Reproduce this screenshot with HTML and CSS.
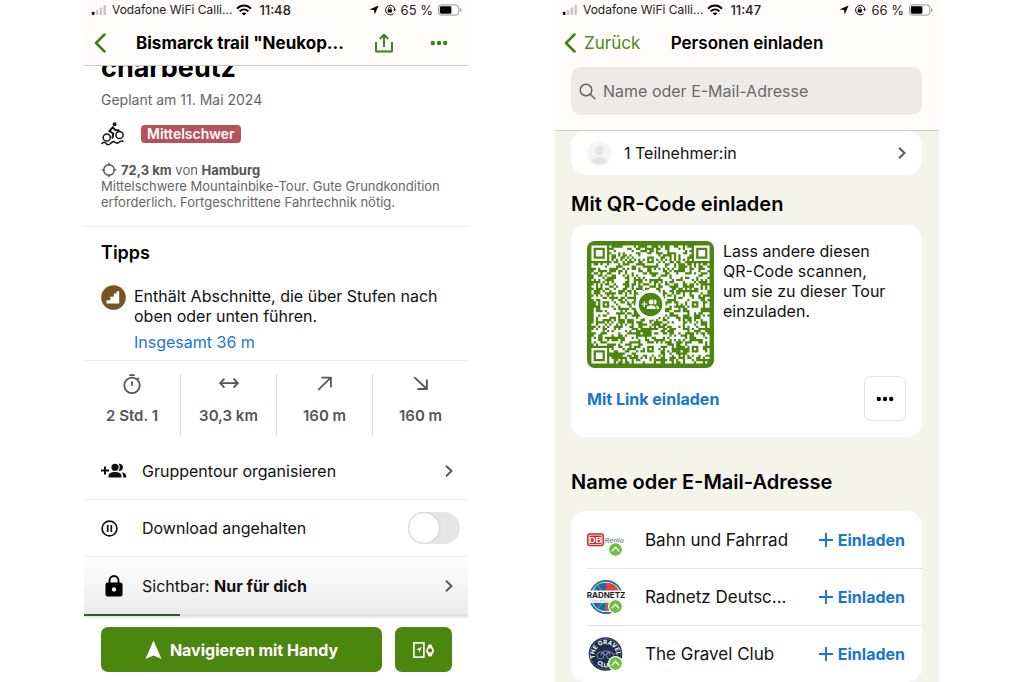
FILE: index.html
```html
<!DOCTYPE html>
<html lang="de">
<head>
<meta charset="utf-8">
<meta name="viewport" content="width=device-width, initial-scale=1">
<title>Tour planen</title>
<link rel="stylesheet" href="styles.css">
</head>
<body>
<svg class="defs" aria-hidden="true">
  <symbol id="signal" viewBox="0 0 17 12"><rect x="0" y="8" width="3" height="4" rx=".8" fill="#111"/><rect x="4.6" y="6" width="3" height="6" rx=".8" fill="#c9c7c6"/><rect x="9.2" y="3" width="3" height="9" rx=".8" fill="#c9c7c6"/><rect x="13.8" y="0" width="3" height="12" rx=".8" fill="#c9c7c6"/></symbol>
  <symbol id="wifi" viewBox="0 0 16 12"><g fill="none" stroke="#000" stroke-width="2"><path d="M1 4.6C5 .4 11 .4 15 4.6"/><path d="M3.6 7.4c2.6-2.5 6.2-2.5 8.8 0"/></g><path d="M8 11.6L5.7 9.3c1.3-1.2 3.3-1.2 4.6 0z"/></symbol>
  <symbol id="locate" viewBox="0 0 10 10"><path d="M9.6.4L5.7 9.6 5.1 5.1.4 4.4z"/></symbol>
  <symbol id="rotlock" viewBox="0 0 12 12"><path d="M9.8 2.7A4.8 4.8 0 1 0 9.600 9.600" fill="none" stroke="#111" stroke-width="1"/><path d="M9.8 2.7a4.800 4.800 0 0 1 .9 2.800" fill="none" stroke="#111" stroke-width="1"/><path d="M9 5.300h3l-1.400 2z"/><rect x="3.7" y="5.2" width="4.2" height="3.3" rx=".5"/><path d="M4.6 5.3V4.4a1.2 1.2 0 0 1 2.4 0v.9" fill="none" stroke="#111" stroke-width=".9"/></symbol>
  <symbol id="battery" viewBox="0 0 26 12"><rect x=".5" y=".5" width="22" height="11" rx="3" fill="#fff" stroke="#8e8c8b"/><rect x="2" y="2" width="12.5" height="8" rx="1.5"/><path d="M24 4v4c1-.3 1.5-1 1.5-2S25 4.300 24 4z" fill="#8e8c8b"/></symbol>
  <symbol id="back" viewBox="0 0 12 20"><path d="M10.500 1.500L2 10l8.500 8.500" fill="none" stroke="#3d8210" stroke-width="2.500" stroke-linecap="round" stroke-linejoin="round"/></symbol>
  <symbol id="chevron" viewBox="0 0 10 14"><path d="M2 1.700L7.500 7 2 12.300" fill="none" stroke="#555" stroke-width="1.900"/></symbol>
  <symbol id="group" viewBox="0 0 26 16"><path d="M0 7.500h8M4 3.500v8" stroke="currentColor" stroke-width="2" fill="none"/><circle cx="14" cy="4.300" r="3.600" fill="currentColor"/><path d="M7.500 14.500v-1.500c0-2.800 3-4 6.500-4s6.500 1.200 6.500 4v1.500z" fill="currentColor"/><path d="M20.500 9.300c3 .5 4.700 1.700 4.700 3.700v1.500h-3V13c0-1.500-.6-2.700-1.700-3.700z" fill="currentColor"/><path d="M17.600 .8a3.600 3.600 0 1 1 0 7c1.500-2 1.500-5 0-7z" fill="currentColor"/></symbol>
  <symbol id="dots" viewBox="0 0 18 6"><circle cx="2.800" cy="3" r="2.200"/><circle cx="9" cy="3" r="2.200"/><circle cx="15.200" cy="3" r="2.200"/></symbol>
  <symbol id="verified" viewBox="0 0 14 14"><circle cx="7" cy="7" r="7" fill="#6cc13f"/><path d="M3 9l4-4.300L11 9" fill="none" stroke="#fff" stroke-width="1.500"/></symbol>
  <symbol id="plus" viewBox="0 0 16 16"><path d="M8 1v14M1 8h14" stroke="#1a76d2" stroke-width="1.900"/></symbol>
</svg>

<main class="screens">
  <section class="phone tour">
    <header class="topbar">
      <div class="status">
        <svg class="i-signal"><use href="#signal"/></svg><span>Vodafone WiFi Calli...</span><svg class="i-wifi"><use href="#wifi"/></svg><span class="time">11:48</span>
        <span class="status-right"><svg class="i-small"><use href="#locate"/></svg><svg class="i-lock"><use href="#rotlock"/></svg><span>65 %</span><svg class="i-battery"><use href="#battery"/></svg></span>
      </div>
      <div class="nav">
        <button class="plain" aria-label="Zurück"><svg class="i-back"><use href="#back"/></svg></button>
        <h1 class="nav-title tour-title">Bismarck trail "Neukop...</h1>
        <button class="plain share" aria-label="Teilen"><svg width="18" height="20" viewBox="0 0 18 20" fill="none" stroke="#3d8210" stroke-width="1.900" stroke-linejoin="round"><path d="M1 9v9.500h16V9M9 14V2M4.800 6L9 1.600 13.200 6"/></svg></button>
        <button class="plain more" aria-label="Mehr"><svg class="i-dots"><use href="#dots"/></svg></button>
      </div>
    </header>

    <div class="scroll">
      <div class="summary">
        <h2 class="place">charbeutz</h2>
        <p class="planned">Geplant am 11. Mai 2024</p>
        <div class="sport">
          <svg width="24" height="24" viewBox="0 0 24 24" fill="none" stroke="#151515" stroke-width="1.500" stroke-linejoin="round" stroke-linecap="round"><circle cx="5.800" cy="15.500" r="3.600"/><circle cx="18.500" cy="13" r="3.600"/><circle cx="13.600" cy="2.300" r="1.200" fill="#151515"/><path d="M11.700 5.300L8.300 9.200l4 2.300-.8 4.300M11.700 5.300l2.600 2.800 3.300.2M8.500 9l3-3.300" stroke-width="2"/><path d="M1 21.500c1.400-1.600 3-1.600 4.200 0s2.800 1.600 4.300 0 2.800-2.800 4.500-1.300 2.700 1.300 4 0 2.700-1.700 4-.8"/></svg>
          <span class="badge">Mittelschwer</span>
        </div>
        <p class="meta"><svg width="16" height="16" viewBox="0 0 16 16" fill="none" stroke="#555" stroke-width="1.400"><circle cx="8" cy="8" r="5.300"/><path d="M8 .8v3M8 12.200v3M.8 8h3M12.200 8h3"/></svg><span><b>72,3 km</b> von <b>Hamburg</b></span></p>
        <p class="detail">Mittelschwere Mountainbike-Tour. Gute Grundkondition erforderlich. Fortgeschrittene Fahrtechnik nötig.</p>
      </div>

      <section class="tips">
        <h2>Tipps</h2>
        <div class="tip">
          <svg width="25" height="25" viewBox="0 0 25 25"><circle cx="12.500" cy="12.500" r="12.300" fill="#765522"/><path d="M5.500 18.500v-3.300h3.800v-3.400h3.500V8.500h2.700V6.300h2.700v12.200z" fill="#fff"/></svg>
          <div>
            <p>Enthält Abschnitte, die über Stufen nach oben oder unten führen.</p>
            <a href="#stufen">Insgesamt 36 m</a>
          </div>
        </div>
      </section>

      <ul class="stats">
        <li><svg width="20" height="20" viewBox="0 0 22 22" fill="none" stroke="#555" stroke-width="2"><circle cx="11" cy="12.500" r="8.500"/><path d="M8 1.300h6M11 8v5M17 5.500l1.500-1.300"/></svg><span>2 Std. 1</span></li>
        <li><svg width="20" height="20" viewBox="0 0 22 22" fill="none" stroke="#555" stroke-width="2"><path d="M2 10h18M6 5L1.300 10l4.700 5M16 5l4.700 5-4.700 5"/></svg><span>30,3 km</span></li>
        <li><svg width="20" height="20" viewBox="0 0 22 22" fill="none" stroke="#555" stroke-width="2"><path d="M3.500 17.500L17.500 4M7 4h10.500v10.500"/></svg><span>160 m</span></li>
        <li><svg width="20" height="20" viewBox="0 0 22 22" fill="none" stroke="#555" stroke-width="2"><path d="M3.500 3.500L17.500 16.500M17.500 6v10.500H7"/></svg><span>160 m</span></li>
      </ul>

      <div class="rows">
        <button class="plain row"><span class="row-icon"><svg width="26" height="16"><use href="#group"/></svg></span><span class="row-label">Gruppentour organisieren</span><svg class="i-chevron"><use href="#chevron"/></svg></button>
        <div class="row">
          <span class="row-icon"><svg width="17" height="17" viewBox="0 0 17 17" fill="none" stroke="#111" stroke-width="1.700"><circle cx="8.500" cy="8.500" r="7.400"/><path d="M6.700 5v7M10.300 5v7"/></svg></span>
          <label class="row-label" for="download">Download angehalten</label>
          <input class="switch" type="checkbox" id="download">
        </div>
        <button class="plain row fade"><span class="row-icon lock"><svg width="18" height="22" viewBox="0 0 18 22"><path d="M4.500 8V5.500a4.500 4.500 0 0 1 9 0V8" fill="none" stroke="#000" stroke-width="1.800"/><path fill-rule="evenodd" d="M2.500 7.500h13a2 2 0 0 1 2 2v10a2 2 0 0 1-2 2h-13a2 2 0 0 1-2-2v-10a2 2 0 0 1 2-2zM9 12.300a2.200 2.200 0 1 0 .01 0z"/></svg></span><span class="row-label">Sichtbar: <b>Nur für dich</b></span><svg class="i-chevron"><use href="#chevron"/></svg></button>
      </div>
      <div class="scrollbar"></div>
    </div>

    <footer class="actions">
      <button class="go"><svg width="17" height="20" viewBox="0 0 17 20"><path d="M8.500.5L16.500 19l-8-3.600L.5 19z" fill="#fff"/></svg>Navigieren mit Handy</button>
      <button class="devices" aria-label="An Gerät senden"><svg width="21" height="16" viewBox="0 0 21 16" fill="none" stroke="#fff"><rect x=".9" y=".9" width="10" height="14.200" stroke-width="1.600"/><path d="M8.700 4.800L6.500 10.800 6 8.200 3.300 7.500z" fill="#fff" stroke="none"/><circle cx="17" cy="8.500" r="3" stroke-width="1.700"/><path d="M15 5.500l.6-2.500h2.800l.6 2.500M15 11.500l.6 2.500h2.800l.6-2.500" fill="#fff" stroke-width="1"/></svg></button>
    </footer>
  </section>

  <section class="phone invite">
    <header class="topbar">
      <div class="status">
        <svg class="i-signal"><use href="#signal"/></svg><span>Vodafone WiFi Calli...</span><svg class="i-wifi"><use href="#wifi"/></svg><span class="time">11:47</span>
        <span class="status-right"><svg class="i-small"><use href="#locate"/></svg><svg class="i-lock"><use href="#rotlock"/></svg><span>66 %</span><svg class="i-battery"><use href="#battery"/></svg></span>
      </div>
      <div class="nav centered">
        <button class="plain back-label"><svg class="i-back"><use href="#back"/></svg>Zurück</button>
        <h1 class="nav-title">Personen einladen</h1>
      </div>
      <label class="search">
        <svg width="17" height="17" viewBox="0 0 17 17" fill="none" stroke="#666" stroke-width="1.500"><circle cx="7" cy="7" r="5.800"/><path d="M11.300 11.300l5 5"/></svg>
        <input type="search" placeholder="Name oder E-Mail-Adresse" aria-label="Name oder E-Mail-Adresse">
      </label>
    </header>

    <div class="scroll invite-body">
      <button class="plain card participant">
        <svg width="25" height="25" viewBox="0 0 25 25"><circle cx="12.500" cy="12.500" r="12.300" fill="#f5f5f5"/><circle cx="12.500" cy="9.500" r="4.500" fill="#e4e4e4"/><path d="M4.500 20.500c2-6 14-6 16 0a12 12 0 0 1-16 0z" fill="#e4e4e4"/></svg>
        <span class="row-label">1 Teilnehmer:in</span>
        <svg class="i-chevron"><use href="#chevron"/></svg>
      </button>

      <h2 class="section-title">Mit QR-Code einladen</h2>
      <div class="card qr-card">
        <div class="qr-top">
          <svg class="qr" id="qr" viewBox="0 0 57 57" role="img" aria-label="QR-Code"><rect width="57" height="57" rx="3.500" fill="#4b860e"/></svg>
          <p>Lass andere diesen<br>QR-Code scannen,<br>um sie zu dieser Tour einzuladen.</p>
        </div>
        <div class="qr-bottom">
          <a class="strong" href="#link">Mit Link einladen</a>
          <button class="options" aria-label="Weitere Optionen"><svg class="i-dots"><use href="#dots"/></svg></button>
        </div>
      </div>

      <h2 class="section-title second">Name oder E-Mail-Adresse</h2>
      <ul class="card people">
        <li>
          <span class="avatar"><svg width="38" height="38" viewBox="0 0 38 38"><rect x=".8" y="13" width="15.500" height="11.500" rx="2" fill="#fff" stroke="#d3202e" stroke-width="1.500"/><rect x="2.500" y="14.500" width="12" height="8.500" fill="#d3202e"/><text x="8.500" y="22.300" text-anchor="middle" class="logo-db">DB</text><text x="17.500" y="21.500" class="logo-regio">Regio</text></svg><svg class="tick"><use href="#verified"/></svg></span>
          <span class="name">Bahn und Fahrrad</span>
          <button class="plain add"><svg width="16" height="16"><use href="#plus"/></svg>Einladen</button>
        </li>
        <li>
          <span class="avatar"><svg width="38" height="38" viewBox="0 0 38 38"><circle cx="19" cy="19" r="16" fill="#fff" stroke="#20709b" stroke-width="1.800"/><path d="M19 19L6 13A14 14 0 0 1 19 4.800z" fill="#1d6c9c"/><path d="M19 4.800A14 14 0 0 1 32 13L19 19z" fill="#e43d42"/><path d="M6 25l13-3v11A14 14 0 0 1 6 25z" fill="#1d6c9c"/><path d="M19 22l13 3a14 14 0 0 1-13 8z" fill="#e43d42"/><path d="M19 19L10 6M19 19L5 9M19 20L9 33M19 20v14" stroke="#79b0cd" stroke-width=".7"/><rect y="12.500" width="38" height="12.500" fill="#fff"/><text x="19" y="19.500" text-anchor="middle" class="logo-rad">RADNETZ</text><text x="15" y="24.500" text-anchor="middle" class="logo-sub">DEUTSCH</text></svg><svg class="tick"><use href="#verified"/></svg></span>
          <span class="name">Radnetz Deutsc...</span>
          <button class="plain add"><svg width="16" height="16"><use href="#plus"/></svg>Einladen</button>
        </li>
        <li>
          <span class="avatar"><svg width="38" height="38" viewBox="0 0 38 38"><circle cx="18.500" cy="19" r="16.800" fill="#1c2c4b"/><circle cx="18.500" cy="19" r="15.500" fill="none" stroke="#62708a" stroke-width=".7"/><path id="arc-top" d="M8 23.500A11 11 0 1 1 29.500 21" fill="none"/><path id="arc-low" d="M7 25A13.500 13.500 0 0 0 29 28" fill="none"/><text class="logo-gravel"><textPath href="#arc-top">THE GRAVEL</textPath></text><text class="logo-gravel"><textPath href="#arc-low" startOffset="18%">CLUB</textPath></text><g fill="none" stroke="#8b99b3" stroke-width=".9"><circle cx="13.500" cy="20.500" r="3.500"/><circle cx="23" cy="20.500" r="3.500"/><path d="M13.500 20.500l3-4.500h5l1.500 4.500M16 17l2 3.500 3.500-4"/></g><path d="M24 18l5 1" stroke="#d34355" stroke-width="1.200"/></svg><svg class="tick"><use href="#verified"/></svg></span>
          <span class="name">The Gravel Club</span>
          <button class="plain add"><svg width="16" height="16"><use href="#plus"/></svg>Einladen</button>
        </li>
      </ul>
    </div>
  </section>
</main>
<script src="qr.js"></script>
</body>
</html>
```

FILE: styles.css
```css
* { box-sizing: border-box; }
body {
  margin: 0;
  background: #fff;
  color: #111;
  font: 16px/20px Inter, "Liberation Sans", sans-serif;
}
h1, h2, p, ul { margin: 0; padding: 0; }
ul { list-style: none; }
svg { flex: none; display: block; }
a { color: #1a76d2; text-decoration: none; }
b { font-weight: 700; }
.defs { position: absolute; width: 0; height: 0; }
.plain { border: 0; padding: 0; background: none; color: inherit; font: inherit; text-align: left; }

.screens {
  display: grid;
  grid-template-columns: 1fr 1fr;
  gap: 87px;
  height: 100vh;
  padding: 0 85px 0 84px;
  overflow: hidden;
}
.phone { display: flex; flex-direction: column; min-width: 0; min-height: 0; }

.topbar { flex: none; background: #fffcfb; border-bottom: 1px solid #cfcdcb; }
.status { display: flex; align-items: center; height: 20px; padding: 0 6px 0 7px; font-size: 12px; color: #222; white-space: nowrap; }
.status > span:first-of-type { margin-left: 5px; }
.status .time { margin-left: 7px; font-size: 13px; font-weight: 500; }
.status-right { display: flex; align-items: center; gap: 5px; margin-left: auto; font-size: 13px; }
.i-signal { width: 16px; height: 10px; }
.i-wifi { width: 16px; height: 12px; margin-left: 4px; }
.i-small { width: 10px; height: 10px; }
.i-lock { width: 12px; height: 12px; }
.i-battery { width: 24px; height: 12px; }

.nav { display: flex; align-items: center; height: 45px; padding: 0 20px 0 10px; }
.i-back { width: 12px; height: 20px; }
.nav-title { font-size: 17px; line-height: 22px; font-weight: 600; color: #000; white-space: nowrap; }
.tour-title { margin-left: 30px; font-weight: 700; }
.share { margin-left: auto; }
.more { margin-left: 37px; fill: #3d8210; }
.i-dots { width: 18px; height: 6px; }
.centered { display: grid; grid-template-columns: 1fr auto 1fr; padding: 0 9px; }
.back-label { display: flex; align-items: center; gap: 8px; color: #4b8a20; font-size: 17px; }

.scroll { flex: 1; min-height: 0; overflow: hidden; }
.summary { padding: 0 16px 16px 17px; border-bottom: 1px solid #ececec; color: #666; }
.place { margin-top: -13px; font-size: 27px; line-height: 30px; font-weight: 700; color: #000; }
.planned { margin-top: 7px; font-size: 14px; }
.sport { display: flex; align-items: center; gap: 16px; margin-top: 12px; }
.badge { padding: 0 6px; border-radius: 4px; background: #b9505e; color: #fff; font-size: 14px; line-height: 18px; font-weight: 600; }
.meta { display: flex; align-items: center; gap: 4px; margin-top: 16px; font-size: 13px; line-height: 16px; }
.meta b { color: #555; }
.detail { font-size: 13px; line-height: 16px; }

.tips { padding: 14px 16px 8px 17px; border-bottom: 1px solid #ececec; }
.tips h2 { font-size: 18px; line-height: 24px; font-weight: 600; color: #000; }
.tip { display: flex; gap: 8px; margin-top: 20px; }
.tip p { margin-top: 1px; }
.tip a { display: block; margin-top: 6px; }

.stats { display: grid; grid-template-columns: repeat(4, 1fr); padding: 13px 0 7px; }
.stats li { display: flex; flex-direction: column; align-items: center; gap: 12px; height: 62px; color: #555; font-size: 15px; font-weight: 600; }
.stats li + li { border-left: 1px solid #ddd; }

.row { display: flex; align-items: center; width: 100%; height: 57px; padding: 0 14px 0 17px; border-bottom: 1px solid #ececec; }
.row-icon { width: 41px; }
.lock { padding-left: 4px; }
.row-label { flex: 1; }
.i-chevron { width: 10px; height: 14px; }
.switch { appearance: none; width: 52px; height: 32px; margin: 0 -6px 0 0; border-radius: 16px; background: #e6e6e6; display: flex; align-items: center; padding: 1px; }
.switch::before { content: ""; width: 30px; height: 30px; border-radius: 50%; background: #fff; box-shadow: 0 0 2px #aaa; }
.switch:checked { justify-content: flex-end; background: #4b860e; }
.fade { border: 0; background: linear-gradient(#fff, #ebebeb); }
.scrollbar { height: 4px; background: linear-gradient(90deg, #315d2c 25%, #e0e0e0 25%) 0 0 / 100% 2px no-repeat #e9e9e9; }

.actions { flex: none; display: flex; gap: 13px; padding: 9px 16px 10px 17px; }
.actions button { display: flex; align-items: center; justify-content: center; height: 45px; border: 0; border-radius: 7px; background: #4b860e; color: #fff; font: inherit; font-weight: 700; }
.actions .go { flex: 1; gap: 8px; }
.actions .devices { width: 57px; padding: 0; }

.invite { background: #f4f4e8; }
.invite .topbar { padding-bottom: 15px; }
.search { display: flex; align-items: center; gap: 7px; height: 48px; margin: 2px 17px 0 16px; padding: 0 8px; border-radius: 10px; background: #edeae8; }
.search input { flex: 1; min-width: 0; border: 0; padding: 0; outline: 0; background: none; font: inherit; color: #111; }
.search input::placeholder { color: #6a6a6a; opacity: 1; }
.invite-body { padding: 0 17px 0 16px; }
.card { border-radius: 15px; background: #fff; }
.participant { display: flex; align-items: center; gap: 12px; width: 100%; height: 44px; padding: 0 15px 0 16px; }
.section-title { margin-top: 16px; font-size: 20px; line-height: 26px; font-weight: 600; color: #000; white-space: nowrap; }
.qr-card { margin-top: 8px; padding: 16px; }
.qr-top { display: flex; gap: 9px; }
.qr { width: 127px; height: 127px; }
.qr-bottom { display: flex; align-items: center; justify-content: space-between; margin-top: 8px; }
.strong { font-weight: 700; }
.options { display: grid; place-items: center; width: 42px; height: 45px; padding: 0; border: 1px solid #e3e3e3; border-radius: 7px; background: #fff; }
.second { margin-top: 32px; }
.people { margin-top: 16px; padding-left: 16px; }
.people li { display: flex; align-items: center; height: 57px; padding-right: 17px; }
.people li + li { border-top: 1px solid #e3e3e3; }
.avatar { position: relative; width: 58px; }
.tick { position: absolute; left: 21px; top: 21px; width: 15px; height: 15px; border-radius: 50%; background: #fff; padding: 1px; }
.name { flex: 1; font-size: 17px; white-space: nowrap; }
.add { display: flex; align-items: center; gap: 4px; color: #1a76d2; font-weight: 700; }
.logo-db { font: 700 9px "Liberation Sans", sans-serif; fill: #fff; }
.logo-regio { font: italic 700 7px "Liberation Sans", sans-serif; fill: #8b8f9c; }
.logo-rad { font: 700 8px Inter, sans-serif; fill: #222; }
.logo-sub { font: 4px Inter, sans-serif; fill: #8aa; }
.logo-gravel { font: 700 6px Inter, sans-serif; fill: #fff; }
```

FILE: qr.js
```js
(function () {
  var size = 53, seed = 90217, cells = [];
  function next() {
    seed = (seed * 1103515245 + 12345) % 2147483648;
    return seed / 2147483648;
  }
  for (var y = 0; y < size; y++) {
    cells.push([]);
    for (var x = 0; x < size; x++) cells[y].push(next() < 0.5);
  }
  // Concentric square with alternating rings around a centre module.
  function rings(cx, cy, outer, off) {
    for (var y = -outer; y <= outer; y++) {
      for (var x = -outer; x <= outer; x++) {
        var row = cells[cy + y];
        if (!row || cx + x < 0 || cx + x >= size) continue;
        row[cx + x] = off.indexOf(Math.max(Math.abs(x), Math.abs(y))) < 0;
      }
    }
  }
  [[6, 26], [26, 6], [26, 46], [46, 26], [46, 46]].forEach(function (p) { rings(p[0], p[1], 2, [1]); });
  [[3, 3], [49, 3], [3, 49]].forEach(function (p) { rings(p[0], p[1], 4, [2, 4]); });
  for (var i = 8; i < 45; i++) { cells[6][i] = cells[i][6] = i % 2 === 0; }

  var d = "";
  cells.forEach(function (row, y) {
    row.forEach(function (on, x) { if (on) d += "M" + (x + 2) + " " + (y + 2) + "h1v1h-1z"; });
  });
  document.getElementById("qr").insertAdjacentHTML("beforeend",
    '<path fill="#fff" d="' + d + '"/>' +
    '<circle cx="28.500" cy="28.500" r="6.800" fill="#fff"/>' +
    '<circle cx="28.500" cy="28.500" r="5.300" fill="#4b860e"/>' +
    '<use href="#group" x="24.500" y="26" width="8" height="5" color="#fff"/>');
})();
```
